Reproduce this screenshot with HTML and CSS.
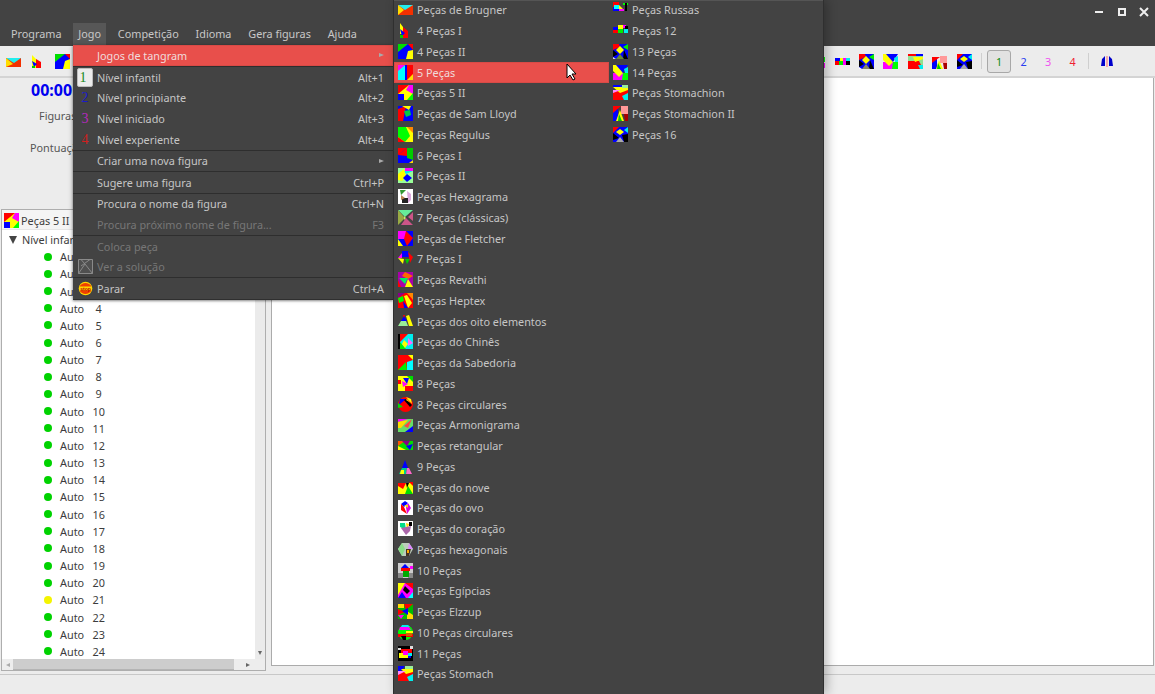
FILE: index.html
```html
<!DOCTYPE html>
<html lang="pt">
<head>
<meta charset="utf-8">
<title>gTans</title>
<link rel="stylesheet" href="styles.css">
</head>
<body>
<div class="window">
  <div class="titlebar">
    <svg class="wc" viewBox="0 0 12 12"><rect x="1" y="5" width="8" height="2" fill="#eee"/></svg>
    <svg class="wc" viewBox="0 0 12 12"><path d="M2 2h8v8H2z M4 4v4h4V4z" fill="#eee" fill-rule="evenodd"/></svg>
    <svg class="wc" viewBox="0 0 12 12"><path d="M2 2l8 8M10 2l-8 8" stroke="#eee" stroke-width="2"/></svg>
  </div>
  <div class="menubar">
    <span class="mi">Programa</span><span class="mi on">Jogo</span><span class="mi">Competição</span><span class="mi">Idioma</span><span class="mi">Gera figuras</span><span class="mi">Ajuda</span>
  </div>
  <div class="toolbar">
    <svg class="ti" viewBox="0 0 15 15"><path fill="#f33000" d="M0 4h15v9H0z"/><path fill="#2ee" d="M0 4h15L8 9z"/><path fill="#fd0" d="M0 4l7 6-7 3z"/></svg>
    <svg class="ti" viewBox="0 0 15 15"><path fill="#ff0" d="M2 1l4 4v9H2z"/><path fill="#f00" d="M6 5l5 3v6H6z"/><path fill="#00f" d="M2 7l5 3-3 3z"/><path fill="#0c0" d="M2 12h3v2H2z"/></svg>
    <svg class="ti" viewBox="0 0 15 15"><path fill="#00f" d="M0 0h15v15H0z"/><path fill="#0d0" d="M0 0h10L0 8z"/><path fill="#f00" d="M10 0h5v5z"/><path fill="#ff0" d="M10 7l5-2v10H8z"/></svg>
    <div class="tb-right">
      <svg class="ti" viewBox="0 0 15 15"><path fill="#f00" d="M0 3h6v5H0z"/><path fill="#00f" d="M0 8h7v6H0z"/><path fill="#ff0" d="M6 3l4 5-4 2z"/><path fill="#0f0" d="M10 3h5v5h-5z"/><path fill="#f0f" d="M7 9h8v5H7z"/></svg>
      <svg class="ti" viewBox="0 0 15 15"><path fill="#00f" d="M0 4h5v3H0z"/><path fill="#ff0" d="M5 4h5v3H5z"/><path fill="#f00" d="M0 7h4v4H0z"/><path fill="#0e0" d="M4 7h4v4H4z"/><path fill="#f0f" d="M8 4h3v7H8z"/><path fill="#0ee" d="M11 4h4v3h-4z"/><path fill="#000" d="M11 7h4v4h-4z"/></svg>
      <svg class="ti" viewBox="0 0 15 15"><path fill="#00f" d="M0 0h15v15H0z"/><path fill="#f00" d="M0 0h6l1 3-7 3z"/><path fill="#0e0" d="M15 0v6l-5-3z"/><path fill="#ff0" d="M7 2l4 4-4 4-4-4z"/><path fill="#000" d="M0 6l5 4-5 3zM11 6l4 9h-5z"/><path fill="#886" d="M3 15l4-5 4 5z"/><path fill="#fff" d="M0 13l3 2H0z"/></svg>
      <svg class="ti" viewBox="0 0 15 15"><path fill="#f0f" d="M0 8h15v7H0z"/><path fill="#ff0" d="M0 0h7l3 8-4 4L0 6z"/><path fill="#00f" d="M3 0h12l-5 8z"/><path fill="#0f0" d="M10 8l5 0v7H9z"/><path fill="#0ee" d="M11 4l4-2v6h-3z"/></svg>
      <svg class="ti" viewBox="0 0 15 15"><path fill="#90e090" d="M0 0h15v15H0z"/><path fill="#00f" d="M0 0h15v2H0z"/><path fill="#f00" d="M0 0h8v2H0zM0 7h11l4 8H0z"/><path fill="#ff0" d="M5 3h10v2l-8 3z"/><path fill="#0ee" d="M10 11h5v4h-3z"/></svg>
      <svg class="ti" viewBox="0 0 15 15"><path fill="#00f" d="M0 3h5v12H0z"/><path fill="#f99" d="M8 2h7v7H8z"/><path fill="#f00" d="M0 3h8L0 9z"/><path fill="#ff0" d="M4 15l3-9 4 9z"/><path fill="#0c0" d="M6 9l3 6H5z"/><path fill="#a00" d="M11 9h4v6h-3z"/></svg>
      <svg class="ti" viewBox="0 0 15 15"><path fill="#00f" d="M0 0h15v15H0z"/><path fill="#f00" d="M0 0h6L0 6z"/><path fill="#0ee" d="M15 0v6l-4-3z"/><path fill="#ff0" d="M7 2l4 3-4 3-4-3z"/><path fill="#000" d="M0 6l6 5-6 2zM9 8l6-1v8h-4z"/><path fill="#aaa" d="M3 15l4-5 4 5z"/></svg>
      <span class="sep"></span>
      <span class="lv act c1">1</span><span class="lv c2">2</span><span class="lv c3">3</span><span class="lv c4">4</span>
      <span class="sep sep2"></span>
      <svg class="ti last" viewBox="0 0 15 15"><path fill="#00c" d="M1 12l1-7 3-3v10zM9 2l3 3 1 7H9z"/><path fill="#f66" d="M6 2h2v11H6z"/><path fill="#eee" d="M6.500 2h1v11h-1z"/></svg>
    </div>
  </div>
  <div class="main">
    <div class="left">
      <div class="info">
        <div class="timer">00:00</div>
        <div class="lab fig">Figuras</div>
        <div class="lab pon">Pontuação</div>
      </div>
      <div class="tree">
        <div class="tab">
          <svg class="ic" viewBox="0 0 15 15"><path fill="#ff0" d="M0 0h15v15H0z"/><path fill="#f00" d="M0 0h11L0 9z"/><path fill="#f0f" d="M11 0h4v9L8 5z"/><path fill="#00f" d="M0 9h6v6H0z"/><path fill="#0f0" d="M15 8v7H9z"/></svg>
          <span>Peças 5 II</span>
        </div>
        <div class="tree-body">
          <div class="rows">
            <div class="root"><i class="tri"></i>Nível infantil</div>
            <div class="leaf"><i class="dot"></i><span>Auto    1</span></div>
            <div class="leaf"><i class="dot"></i><span>Auto    2</span></div>
            <div class="leaf"><i class="dot"></i><span>Auto    3</span></div>
            <div class="leaf"><i class="dot"></i><span>Auto    4</span></div>
            <div class="leaf"><i class="dot"></i><span>Auto    5</span></div>
            <div class="leaf"><i class="dot"></i><span>Auto    6</span></div>
            <div class="leaf"><i class="dot"></i><span>Auto    7</span></div>
            <div class="leaf"><i class="dot"></i><span>Auto    8</span></div>
            <div class="leaf"><i class="dot"></i><span>Auto    9</span></div>
            <div class="leaf"><i class="dot"></i><span>Auto   10</span></div>
            <div class="leaf"><i class="dot"></i><span>Auto   11</span></div>
            <div class="leaf"><i class="dot"></i><span>Auto   12</span></div>
            <div class="leaf"><i class="dot"></i><span>Auto   13</span></div>
            <div class="leaf"><i class="dot"></i><span>Auto   14</span></div>
            <div class="leaf"><i class="dot"></i><span>Auto   15</span></div>
            <div class="leaf"><i class="dot"></i><span>Auto   16</span></div>
            <div class="leaf"><i class="dot"></i><span>Auto   17</span></div>
            <div class="leaf"><i class="dot"></i><span>Auto   18</span></div>
            <div class="leaf"><i class="dot"></i><span>Auto   19</span></div>
            <div class="leaf"><i class="dot"></i><span>Auto   20</span></div>
            <div class="leaf"><i class="dot y"></i><span>Auto   21</span></div>
            <div class="leaf"><i class="dot"></i><span>Auto   22</span></div>
            <div class="leaf"><i class="dot"></i><span>Auto   23</span></div>
            <div class="leaf"><i class="dot"></i><span>Auto   24</span></div>
          </div>
          <div class="vbar"><i class="arr-d"></i></div>
        </div>
        <div class="hbar"><i class="arr-l"></i><i class="thumb"></i><i class="arr-r"></i></div>
      </div>
    </div>
    <div class="canvas"></div>
  </div>
  <div class="status"></div>
</div>

<div class="menu">
  <div class="row sel"><span class="gut"></span><span class="t">Jogos de tangram</span><i class="sub"></i></div>
  <div class="row sep-t"><span class="gut"><b class="num box c1">1</b></span><span class="t">Nível infantil</span><span class="k">Alt+1</span></div>
  <div class="row"><span class="gut"><b class="num c2d">2</b></span><span class="t">Nível principiante</span><span class="k">Alt+2</span></div>
  <div class="row"><span class="gut"><b class="num c3d">3</b></span><span class="t">Nível iniciado</span><span class="k">Alt+3</span></div>
  <div class="row"><span class="gut"><b class="num c4d">4</b></span><span class="t">Nível experiente</span><span class="k">Alt+4</span></div>
  <div class="row sep-t"><span class="gut"></span><span class="t">Criar uma nova figura</span><i class="sub"></i></div>
  <div class="row sep-t"><span class="gut"></span><span class="t">Sugere uma figura</span><span class="k">Ctrl+P</span></div>
  <div class="row sep-t"><span class="gut"></span><span class="t">Procura o nome da figura</span><span class="k">Ctrl+N</span></div>
  <div class="row dis"><span class="gut"></span><span class="t">Procura próximo nome de figura...</span><span class="k">F3</span></div>
  <div class="row dis sep-t"><span class="gut"></span><span class="t">Coloca peça</span></div>
  <div class="row dis"><span class="gut"><svg class="ic" viewBox="0 0 15 15"><path d="M.5.5h14v14H.5zM.5 14.500L7 5l7.500 9.500M7 5L3 .5M3 7l9-6.500" fill="#505050" stroke="#8a8a8a"/></svg></span><span class="t">Ver a solução</span></div>
  <div class="row sep-t"><span class="gut"><svg class="ic" viewBox="0 0 15 15"><circle cx="7.500" cy="7.500" r="6.800" fill="#ffd800"/><path d="M1.500 5.500a7 7 0 0 1 12 0zM1.500 9.500a7 7 0 0 0 12 0z" fill="#f04000"/><text class="stop" x="7.500" y="9.500" text-anchor="middle">stop</text></svg></span><span class="t">Parar</span><span class="k">Ctrl+A</span></div>
</div>

<div class="submenu">
  <div class="it"><svg class="ic" viewBox="0 0 15 15"><path fill="#f33000" d="M0 3h15v10H0z"/><path fill="#2ee" d="M0 3h15L7 8z"/><path fill="#fd0" d="M0 3l6 5-6 5z"/></svg>Peças de Brugner</div>
  <div class="it"><svg class="ic" viewBox="0 0 15 15"><path fill="#ff0" d="M2 0l3 4v7H2z"/><path fill="#f00" d="M5 4l5 4v7H5z"/><path fill="#00f" d="M2 6l5 4-3 3z"/><path fill="#0c0" d="M2 12h3v3H2z"/></svg>4 Peças I</div>
  <div class="it"><svg class="ic" viewBox="0 0 15 15"><path fill="#00f" d="M0 0h15v15H0z"/><path fill="#0d0" d="M0 0h10L0 8z"/><path fill="#f00" d="M10 0h5v6z"/><path fill="#ff0" d="M10 7l5-1v9H8z"/></svg>4 Peças II</div>
  <div class="it hl"><svg class="ic" viewBox="0 0 15 15"><path fill="#f00" d="M0 0h15v15H0z"/><path fill="#0ff" d="M0 5l7-5v15H0z"/><path fill="#f0f" d="M0 0h7L0 6z"/><path fill="#00f" d="M7 0h2v15H7z"/><path fill="#fd0" d="M9 15l6-6v6z"/></svg>5 Peças<svg class="cursor" viewBox="0 0 12 18"><path d="M1 1v14l3-3 3 5 2-1-3-5h4z" fill="#fff" stroke="#000"/></svg></div>
  <div class="it"><svg class="ic" viewBox="0 0 15 15"><path fill="#ff0" d="M0 0h15v15H0z"/><path fill="#f00" d="M0 0h11L0 9z"/><path fill="#f0f" d="M11 0h4v9L8 5z"/><path fill="#00f" d="M0 9h6v6H0z"/><path fill="#0f0" d="M15 8v7H9z"/></svg>Peças 5 II</div>
  <div class="it"><svg class="ic" viewBox="0 0 15 15"><path fill="#00f" d="M0 0h15v15H0z"/><path fill="#f00" d="M0 3L8 0 5 15H0z"/><path fill="#ff0" d="M4 0h9l-2 4z"/><path fill="#0c4" d="M6 5l6-1 1 5-5 2z"/></svg>Peças de Sam Lloyd</div>
  <div class="it"><svg class="ic" viewBox="0 0 15 15"><path fill="#ff0" d="M0 0h15v15H0z"/><path fill="#0f0" d="M0 0h8l4 9-5 6-7-5z"/><path fill="#f80" d="M9 0h6v6z"/><path fill="#f00" d="M0 10l7 5H0z"/></svg>Peças Regulus</div>
  <div class="it"><svg class="ic" viewBox="0 0 15 15"><path fill="#00f" d="M0 0h15v15H0z"/><path fill="#f00" d="M0 7l9-7v8z"/><path fill="#f00" d="M0 0h9L0 7z"/><path fill="#0c0" d="M9 0h6v12l-6-2z"/><path fill="#fd0" d="M11 15l4-3v3z"/></svg>6 Peças I</div>
  <div class="it"><svg class="ic" viewBox="0 0 15 15"><path fill="#9f9" d="M0 0h15v15H0z"/><path fill="#f0f" d="M7 0h8v3H7z"/><path fill="#0ee" d="M5 3h10L8 6z"/><path fill="#ff0" d="M0 6l6-5 2 7-4 5-4-1z"/><path fill="#00f" d="M9 6l5 4-5 4-4-4z"/></svg>6 Peças II</div>
  <div class="it"><svg class="ic" viewBox="0 0 15 15"><path fill="#fff" d="M0 0h15v15H0z"/><path fill="#393" d="M2 1h6L3 6z"/><path fill="#dad" d="M9 2l4 3v6l-3 3z"/><path fill="#222" d="M4 9h6v5H4z"/><path fill="#b85" d="M3 6l4 3-4 2z"/></svg>Peças Hexagrama</div>
  <div class="it"><svg class="ic" viewBox="0 0 15 15"><path fill="#6e9" d="M0 0h15L7 7z"/><path fill="#9a4" d="M0 0v15l7-7z"/><path fill="#c58" d="M15 2v9l-5-4zM8 8l7 7H3z"/><path fill="#ce6" d="M6 6l2 2-2 2z"/></svg>7 Peças (clássicas)</div>
  <div class="it"><svg class="ic" viewBox="0 0 15 15"><path fill="#00f" d="M0 0h15v15H0z"/><path fill="#f0f" d="M0 0h8v8H0z"/><path fill="#f00" d="M8 0l7 7-6 8-3-7z"/><path fill="#ff0" d="M0 8l5 7H0z"/></svg>Peças de Fletcher</div>
  <div class="it"><svg class="ic" viewBox="0 0 15 15"><path fill="#00f" d="M4 0h6l2 6H4z"/><path fill="#f00" d="M10 1l5 5-3 6z"/><path fill="#ff0" d="M0 7l6 1-1 5z"/><path fill="#0c0" d="M7 8h5l-3 5z"/><path fill="#f0f" d="M0 7l4-5v5z"/></svg>7 Peças I</div>
  <div class="it"><svg class="ic" viewBox="0 0 15 15"><path fill="#a0a" d="M0 0h15v15H0z"/><path fill="#f60" d="M7 0l8 4-5 3-6-3z"/><path fill="#0e6" d="M1 6h9l-3 6z"/><path fill="#ff0" d="M7 15l3-8 5 8z"/><path fill="#f00" d="M0 8l3 7H0z"/></svg>Peças Revathi</div>
  <div class="it"><svg class="ic" viewBox="0 0 15 15"><path fill="#f00" d="M0 0h15v15H0z"/><path fill="#808" d="M0 0h7L0 5z"/><path fill="#f80" d="M9 0h6v7z"/><path fill="#ff0" d="M6 3l3-1 5 8-4 5z"/><path fill="#0f0" d="M0 5l5-2 1 5-5 2z"/><path fill="#00f" d="M5 8l5 7H6z"/></svg>Peças Heptex</div>
  <div class="it"><svg class="ic" viewBox="0 0 15 15"><path fill="#ff0" d="M8 2l3-1 4 11h-4z"/><path fill="#00f" d="M6 2l3 5H3z"/><path fill="#f00" d="M5 1h2l-1 3z"/><path fill="#9e9" d="M3 7h5l2 5H0z"/></svg>Peças dos oito elementos</div>
  <div class="it"><svg class="ic" viewBox="0 0 15 15"><path fill="#0ee" d="M0 0h15v15H0z"/><path fill="#000" d="M0 0h2v15H0z"/><path fill="#f00" d="M2 0h8L2 8z"/><path fill="#0e0" d="M2 8l6 7H2z"/><path fill="#ff0" d="M6 6l4 4-3 4-3-4z"/><path fill="#f6f" d="M10 4l5 5-5 3z"/></svg>Peças do Chinês</div>
  <div class="it"><svg class="ic" viewBox="0 0 15 15"><path fill="#f00" d="M0 0h15v15H0z"/><path fill="#ff0" d="M10 0h5v5z"/><path fill="#0e0" d="M0 15l8-8 1 8z"/><path fill="#0ff" d="M9 7l6-2v10H9z"/></svg>Peças da Sabedoria</div>
  <div class="it"><svg class="ic" viewBox="0 0 15 15"><path fill="#ff0" d="M0 0h15v15H0z"/><path fill="#0d0" d="M9 0h6v6z"/><path fill="#00f" d="M5 2h6L9 8z"/><path fill="#f0f" d="M4 5l6 3-5 3z"/><path fill="#f00" d="M7 10h8v5H7zM0 4h3v4H0z"/></svg>8 Peças</div>
  <div class="it"><svg class="ic" viewBox="0 0 15 15"><circle cx="7.500" cy="7.500" r="7.500" fill="#f00"/><path fill="#00f" d="M2 2h6L1 8z"/><path fill="#ff0" d="M8 0l5 2 1 5z"/><path fill="#0d0" d="M0 6l5 4-5 1z"/><path fill="#000" d="M6 3l2-1 6 6-2 2z"/><path fill="#fd0" d="M8 3l1-1 4 4z"/></svg>8 Peças circulares</div>
  <div class="it"><svg class="ic" viewBox="0 0 15 15"><path fill="#6d6" d="M0 2h15v13H0z"/><path fill="#f0f" d="M0 2h10L0 5z"/><path fill="#fd0" d="M0 5l10-2-7 8H0z"/><path fill="#f44" d="M6 9l8-7-4 9z"/><path fill="#00f" d="M7 15l8-6v6z"/></svg>Peças Armonigrama</div>
  <div class="it"><svg class="ic" viewBox="0 0 15 15"><path fill="#0d0" d="M0 3h15v9H0z"/><path fill="#f50" d="M0 3h7L0 8z"/><path fill="#808" d="M4 3h8L9 8z"/><path fill="#00f" d="M8 8l7-2-3 6z"/><path fill="#ff0" d="M0 8l8 4H0z"/></svg>Peças retangular</div>
  <div class="it"><svg class="ic" viewBox="0 0 15 15"><path fill="#00f" d="M7 1l3 8H4z"/><path fill="#0c8" d="M4 9h5l-1 6H1z"/><path fill="#f6c" d="M9 9h2l3 6H8z"/><path fill="#ff0" d="M3 11h3v4H2z"/></svg>9 Peças</div>
  <div class="it"><svg class="ic" viewBox="0 0 15 15"><path fill="#ff0" d="M0 3h15v11H0z"/><path fill="#f00" d="M0 3h8L5 9 0 6z"/><path fill="#0d0" d="M10 6l5 8H7z"/><path fill="#f00" d="M11 2h4v4z"/><path fill="#000" d="M8 3h3l-2 5z"/></svg>Peças do nove</div>
  <div class="it"><svg class="ic" viewBox="0 0 15 15"><path fill="#fff" d="M0 0h15v15H0z"/><path fill="#00f" d="M3 4l4-3 3 2-4 4z"/><path fill="#f00" d="M3 4l3 3 3 7-6-4z"/><path fill="#d0d" d="M10 3l3 5-4 6-1-7z"/><path fill="#fd0" d="M6 5h4v3z"/></svg>Peças do ovo</div>
  <div class="it"><svg class="ic" viewBox="0 0 15 15"><path fill="#fff" d="M0 0h15v15H0z"/><path fill="#0d8" d="M2 2h5L8 9 2 6z"/><path fill="#fd0" d="M8 2l3 1-2 6z"/><path fill="#000" d="M11 1h3v4h-3z"/><path fill="#a6a" d="M3 7l10-2-1 5-4 4z"/></svg>Peças do coração</div>
  <div class="it"><svg class="ic" viewBox="0 0 15 15"><path fill="#bcb" d="M4 1h7l4 6-4 7H4L0 7z"/><path fill="#8d8" d="M4 1l3 6-3 7-4-7z"/><path fill="#d8f" d="M11 1l4 6-5 0z"/><path fill="#432" d="M8 7h5l-2 7H8z"/><path fill="#fa0" d="M9 8h2v3H9z"/></svg>Peças hexagonais</div>
  <div class="it"><svg class="ic" viewBox="0 0 15 15"><path fill="#ccc" d="M0 0h15v15H0z"/><path fill="#888" d="M0 10h5v5H0zM10 10h5v5h-5z"/><path fill="#f0f" d="M12 3h3v3h-3z"/><path fill="#f00" d="M3 5h9v3H3z"/><path fill="#00f" d="M7 1l4 4H3z"/><path fill="#0a0" d="M5 8h6v6H5z"/></svg>10 Peças</div>
  <div class="it"><svg class="ic" viewBox="0 0 15 15"><path fill="#f0f" d="M0 0h15v15H0z"/><path fill="#ff0" d="M0 0h7L0 12z"/><path fill="#00f" d="M0 15l4-6 4 6z"/><path fill="#f00" d="M7 0h8v6z"/><path fill="#000" d="M7 3l5 5-3 3-4-4z"/><path fill="#0ff" d="M10 15l5-6v6z"/></svg>Peças Egípcias</div>
  <div class="it"><svg class="ic" viewBox="0 0 15 15"><path fill="#0b0" d="M0 0h15v15H0z"/><path fill="#fd0" d="M0 0h6v4H0zM9 7l6 4v4H9z"/><path fill="#f00" d="M6 0h9L8 6zM0 5l7 3-7 3z"/><path fill="#00f" d="M4 7l6-3v7z"/><path fill="#f0f" d="M0 11h6l-3 4z"/></svg>Peças Elzzup</div>
  <div class="it"><svg class="ic" viewBox="0 0 15 15"><circle cx="7.500" cy="7.500" r="7.500" fill="#0f0"/><path fill="#f0f" d="M2 2h9l2 3H1z"/><path fill="#0ee" d="M4 0h6l2 2H3z"/><path fill="#ff0" d="M8 6h7v2H8z"/><path fill="#f00" d="M0 9h15v3H0z"/><path fill="#000" d="M3 11h5v4H5z"/><path fill="#c60" d="M8 8h6v3H8z"/></svg>10 Peças circulares</div>
  <div class="it"><svg class="ic" viewBox="0 0 15 15"><path fill="#000" d="M0 0h15v15H0z"/><path fill="#ddd" d="M0 2h3v2H0zM12 0h3v3h-3z"/><path fill="#f00" d="M3 3h11v4H3z"/><path fill="#ff0" d="M1 7h9v5H1z"/><path fill="#f0f" d="M5 5h5v4H5z"/><path fill="#0ee" d="M10 7h4v3h-4z"/><path fill="#00f" d="M10 10h3v2h-3z"/></svg>11 Peças</div>
  <div class="it"><svg class="ic" viewBox="0 0 15 15"><path fill="#f00" d="M0 5h15v10H0z"/><path fill="#00f" d="M0 0h7l-4 5H0z"/><path fill="#ff0" d="M3 3h12v3L8 8z"/><path fill="#9e9" d="M7 0h8v3H7z"/><path fill="#0ee" d="M9 11l6-3v7h-4z"/><path fill="#f8f" d="M0 5h8L0 9z"/></svg>Peças Stomach</div>
  <div class="it"><svg class="ic" viewBox="0 0 15 15"><path fill="#f00" d="M0 0h6v5H0z"/><path fill="#00f" d="M0 5h6v4H0z"/><path fill="#ff0" d="M6 3l4 4H6z"/><path fill="#0f0" d="M10 1h5v2h-5z"/><path fill="#0ff" d="M1 3h5v4H1z"/><path fill="#f0f" d="M6 7h5v2H6z"/><path fill="#000" d="M12 1h2v8h-2z"/></svg>Peças Russas</div>
  <div class="it"><svg class="ic" viewBox="0 0 15 15"><path fill="#00f" d="M0 4h5v3H0z"/><path fill="#ff0" d="M5 2h5v4H5z"/><path fill="#f00" d="M0 7h5v3H0z"/><path fill="#0e0" d="M5 6h5v4H5z"/><path fill="#f0f" d="M10 2h3v3h-3z"/><path fill="#0ee" d="M11 6h4v4h-4z"/><path fill="#000" d="M12 3h3v3h-3z"/></svg>Peças 12</div>
  <div class="it"><svg class="ic" viewBox="0 0 15 15"><path fill="#00f" d="M0 0h15v15H0z"/><path fill="#f00" d="M0 0h6l1 3-7 3z"/><path fill="#0e0" d="M15 0v6l-5-3z"/><path fill="#ff0" d="M7 2l4 4-4 4-4-4z"/><path fill="#000" d="M0 6l5 4-5 3zM11 6l4 9h-5z"/><path fill="#683" d="M3 15l4-5 4 5z"/><path fill="#ddd" d="M0 13l3 2H0z"/></svg>13 Peças</div>
  <div class="it"><svg class="ic" viewBox="0 0 15 15"><path fill="#f0f" d="M0 8h15v7H0z"/><path fill="#ff0" d="M0 0h7l3 8-4 4L0 6z"/><path fill="#00f" d="M3 0h12l-5 8z"/><path fill="#0f0" d="M10 8l5 0v7H9z"/><path fill="#0ee" d="M11 4l4-2v6h-3z"/></svg>14 Peças</div>
  <div class="it"><svg class="ic" viewBox="0 0 15 15"><path fill="#f00" d="M0 5h15v10H0z"/><path fill="#00f" d="M0 0h15v2H0z"/><path fill="#ff0" d="M0 2h15v3L7 8z"/><path fill="#9e9" d="M9 0h6v3H9z"/><path fill="#0ee" d="M9 11l6-3v7h-4z"/><path fill="#f8f" d="M0 5h8L0 8z"/></svg>Peças Stomachion</div>
  <div class="it"><svg class="ic" viewBox="0 0 15 15"><path fill="#00f" d="M0 3h5v12H0z"/><path fill="#f99" d="M8 0h7v8H8z"/><path fill="#f00" d="M0 0h8L0 7z"/><path fill="#ff0" d="M3 15l4-11 4 11z"/><path fill="#0c0" d="M6 8l3 7H5z"/><path fill="#a00" d="M11 8h4v7h-3z"/></svg>Peças Stomachion II</div>
  <div class="it"><svg class="ic" viewBox="0 0 15 15"><path fill="#00f" d="M0 0h15v15H0z"/><path fill="#f00" d="M0 0h6L0 6z"/><path fill="#0ee" d="M15 0v6l-4-3z"/><path fill="#ff0" d="M7 2l4 3-4 3-4-3z"/><path fill="#000" d="M0 6l6 5-6 2zM9 8l6-1v8h-4z"/><path fill="#aaa" d="M3 15l4-5 4 5z"/></svg>Peças 16</div>
</div>
</body>
</html>
```

FILE: styles.css
```css
* { box-sizing: border-box; }
html, body { margin: 0; height: 100%; overflow: hidden; }
body { font-family: "Noto Sans", sans-serif; font-size: 10.850px; color: #3c3c3c; background: #ececec; position: relative; }

.window { width: 1155px; height: 694px; display: flex; flex-direction: column; }

.titlebar { height: 24px; background: #434343; display: flex; justify-content: flex-end; align-items: center; gap: 10px; padding-right: 5px; }
.wc { width: 12px; height: 12px; }

.menubar { height: 22px; background: #434343; display: flex; padding-left: 2.500px; color: #c8c8c8; }
.mi { padding: 0 8.400px; line-height: 20px; }
.mi.on { background: #575757; padding: 0 5px; margin: -1px 3.400px 1px; line-height: 22px; }

.toolbar { height: 32px; background: #ececec; display: flex; align-items: center; padding-left: 6px; border-bottom: 2px solid #d4d4d4; flex: none; }
.ti { width: 15px; height: 15px; margin-right: 9.400px; flex: none; }
.tb-right { margin-left: auto; display: flex; align-items: center; padding-right: 40px; }
.sep { width: 1px; height: 16px; background: #cfcfcf; margin-right: 5px; }
.sep2 { margin-left: 3px; }
.lv { width: 24px; height: 23px; margin-right: .500px; text-align: center; line-height: 23px; border-radius: 3px; }
.lv.act { background: #e2e2e2; border: 1px solid #a8a8a8; line-height: 21px; }
.c1 { color: #0a8a0a; }
.c2 { color: #2a3cf0; }
.c3 { color: #f050f0; }
.c4 { color: #f02030; }
.last { margin: 0 0 0 6px; }

.main { flex: 1; display: flex; min-height: 0; padding-bottom: 3px; border-bottom: 1px solid #c8c8c8; }
.left { width: 266px; display: flex; flex-direction: column; flex: none; }
.info { height: 131px; flex: none; padding-top: 1px; }
.timer { color: #0000f0; font-weight: 700; font-size: 16px; line-height: 22px; margin-left: 31px; }
.lab { color: #555; }
.fig { margin: 7px 0 0 39px; line-height: 16px; }
.pon { margin: 16px 0 0 30px; line-height: 16px; }

.tree { flex: 1; margin-left: 1px; border: 1px solid #aeaeae; background: #fff; display: flex; flex-direction: column; min-height: 0; }
.tab { height: 20px; display: flex; align-items: center; gap: 2px; padding: 2px 0 0 2px; flex: none; background: #f4f4f4; border-bottom: 1px solid #e6e6e6; }
.tree-body { flex: 1; display: flex; min-height: 0; }
.rows { flex: 1; overflow: hidden; padding-top: 1px; }
.root { height: 17.170px; line-height: 17px; padding-left: 7px; display: flex; align-items: center; }
.tri { width: 0; height: 0; border-left: 4.500px solid transparent; border-right: 4.500px solid transparent; border-top: 8px solid #444; margin-right: 5px; }
.leaf { height: 17.170px; display: flex; align-items: center; padding-left: 42px; white-space: pre; }
.dot { width: 8px; height: 8px; border-radius: 50%; background: #00d200; margin-right: 8px; flex: none; }
.dot.y { background: #f4f400; }
.vbar { width: 10px; background: #ebebeb; flex: none; display: flex; align-items: flex-end; justify-content: center; padding-bottom: 4px; }
.arr-d { width: 0; height: 0; border-left: 2.500px solid transparent; border-right: 2.500px solid transparent; border-top: 4px solid #666; }
.hbar { height: 11px; background: #ededed; display: flex; align-items: center; flex: none; padding-left: 4px; }
.arr-l { width: 0; height: 0; border-top: 2.500px solid transparent; border-bottom: 2.500px solid transparent; border-right: 4px solid #aaa; }
.thumb { width: 221px; height: 11px; background: #cdcdcd; border-bottom: 1px solid #b4b4b4; margin: 0 12px 0 3px; }
.arr-r { width: 0; height: 0; border-top: 2.500px solid transparent; border-bottom: 2.500px solid transparent; border-left: 4px solid #666; }

.canvas { flex: none; width: 883px; margin: 0 0 5px 5px; background: #fff; border: 1px solid #ababab; border-top: 0; }
.status { height: 19px; flex: none; background: #ececec; }

.menu { position: absolute; left: 73px; top: 45px; width: 320px; background: #434343; color: #c6c6c6; box-shadow: 0 1px 2px rgba(0,0,0,.35), -1px 0 4px rgba(0,0,0,.25); border-bottom: 1px solid #2f2f2f; }
.row { height: 20.750px; display: flex; align-items: center; padding-right: 9px; }
.row.sep-t { height: 21.500px; border-top: 1px solid #2e2e2e; }
.row.sel { background: #e84f4b; color: #f0dcdc; box-shadow: inset 0 0 0 1px #d94a46; }
.row.dis { color: #777; }
.gut { width: 24px; display: flex; justify-content: center; align-items: center; flex: none; height: 100%; }
.t { flex: 1; white-space: nowrap; }
.k { white-space: nowrap; }
.sub { width: 0; height: 0; border-top: 2.500px solid transparent; border-bottom: 2.500px solid transparent; border-left: 5px solid #aaa; }
.num { font-family: "Liberation Serif", serif; font-weight: 400; font-size: 14px; line-height: 15px; width: 16px; height: 19px; display: flex; align-items: center; justify-content: center; }
.num.box { background: #ececec; border: 1px solid #bdbdbd; border-radius: 2px; color: #1a8a1a; padding-right: 4px; }
.c2d { color: #1a1ad0; }
.c3d { color: #b828c0; }
.c4d { color: #d02020; }
.ic { width: 15px; height: 15px; flex: none; }
.stop { font-size: 5px; font-family: "Liberation Sans", sans-serif; font-weight: 700; fill: #c00000; }

.submenu { position: absolute; left: 393px; top: 0; width: 431px; height: 694px; background: #434343; color: #c6c6c6; border-left: 1px solid #2f2f2f; border-right: 1px solid #2f2f2f; display: grid; grid-auto-flow: column; grid-template-rows: repeat(33, 20.750px); grid-template-columns: 215px 1fr; align-content: start; box-shadow: 3px 0 10px rgba(0,0,0,.28), inset 0 1px #555; }
.it { display: flex; align-items: center; gap: 4px; padding: 0 0 1px 4px; white-space: nowrap; position: relative; }
.it.hl { background: #e84f4b; color: #f0dcdc; box-shadow: inset 0 0 0 1px #d94a46; }
.cursor { position: absolute; left: 172px; top: 1px; width: 12px; height: 18px; }
```
